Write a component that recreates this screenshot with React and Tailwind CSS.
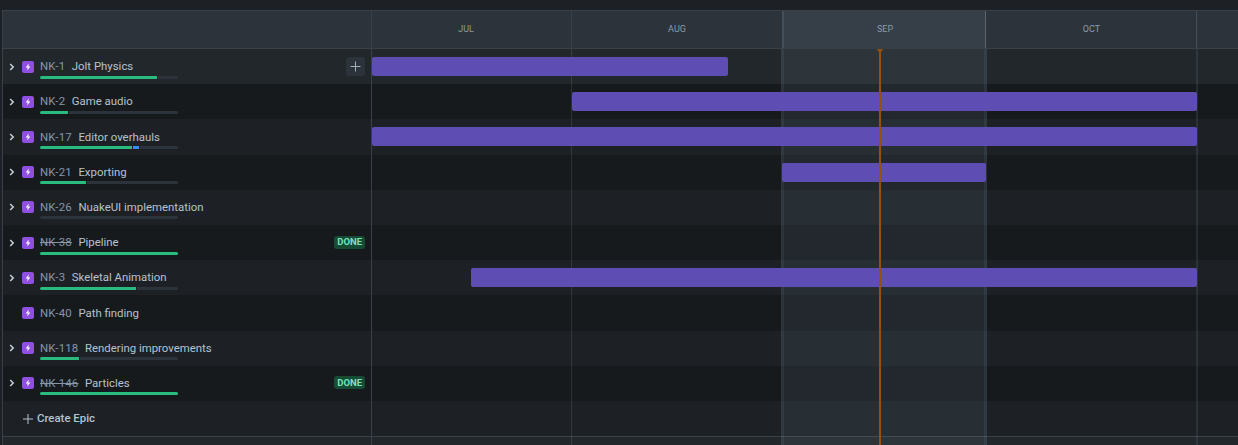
const rows = [
  { k: "NK-1", t: "Jolt Physics", g: 117, b: 0, bar: [0, 356], bg: "bg-[#22272b]", add: true },
  { k: "NK-2", t: "Game audio", g: 28, b: 0, bar: [200, 625], bg: "bg-[#161a1d]" },
  { k: "NK-17", t: "Editor overhauls", g: 92, b: 6, bar: [0, 825], bg: "bg-[#1d2125]" },
  { k: "NK-21", t: "Exporting", g: 46, b: 0, bar: [410, 204], bg: "bg-[#161a1d]" },
  { k: "NK-26", t: "NuakeUI implementation", g: 0, b: 0, bg: "bg-[#1d2125]" },
  { k: "NK-38", t: "Pipeline", g: 138, b: 0, done: true, bg: "bg-[#161a1d]" },
  { k: "NK-3", t: "Skeletal Animation", g: 96, b: 0, bar: [99, 726], bg: "bg-[#1d2125]" },
  { k: "NK-40", t: "Path finding", none: true, bg: "bg-[#161a1d]" },
  { k: "NK-118", t: "Rendering improvements", g: 39, b: 0, bar: null, bg: "bg-[#1d2125]" },
  { k: "NK-146", t: "Particles", g: 138, b: 0, done: true, bg: "bg-[#161a1d]" },
];

function Epic() {
  return (
    <svg width="12" height="12" viewBox="0 0 12 12" className="shrink-0">
      <rect width="12" height="12" rx="2" fill="#8f4fe0" />
      <path d="M6.8 2.4 3.7 6.4h2L5.2 9.6l3.1-4.1h-2z" fill="#fff" />
    </svg>
  );
}

function Chevron() {
  return (
    <svg width="6" height="8" viewBox="0 0 6 8" className="shrink-0">
      <path d="M1.2 1 4.2 4 1.2 7" fill="none" stroke="#c7d1db" strokeWidth="1.5" />
    </svg>
  );
}

function Progress({ g, b }) {
  if (g >= 138) return <div className="h-[3px] w-[138px] rounded-sm bg-[#2abb7f]" />;
  return (
    <div className="flex h-[3px] w-[138px] gap-[1px] overflow-hidden rounded-sm">
      {g > 0 && <div className="h-full bg-[#2abb7f]" style={{ width: g }} />}
      {b > 0 && <div className="h-full bg-[#388bff]" style={{ width: b }} />}
      <div className="h-full flex-1 bg-[#2c333a]" />
    </div>
  );
}

function Row({ r }) {
  return (
    <div className={`flex h-[35.2px] ${r.bg}`}>
      <div className="flex w-[368px] shrink-0 items-center pl-[6px] pr-[6px]">
        <div className="flex w-[13px] shrink-0 items-center">{!r.none && <Chevron />}</div>
        <Epic />
        <div className="ml-[6px] flex min-w-0 flex-1 flex-col">
          <div className={`flex h-[14px] items-center leading-[14px] ${r.none ? "" : "mt-[4.6px]"}`}>
            <span className={`tracking-[0.2px] text-[#8696a7] ${r.done ? "line-through" : ""}`}>{r.k}</span>
            <span className="ml-[6.5px] text-[#b6c2cf]">{r.t}</span>
          </div>
          {!r.none && <div className="mt-[2.4px]"><Progress g={r.g} b={r.b} /></div>}
        </div>
        {r.done && (
          <span className="mb-[1px] flex h-[13px] items-center rounded-[3px] bg-[#164b35] px-[3px] text-[9.5px] font-bold leading-none text-[#7ee2b8]">
            DONE
          </span>
        )}
        {r.add && (
          <span className="flex h-[19px] w-[19px] items-center justify-center rounded-[3px] bg-[#2c333a]">
            <svg width="11" height="11" viewBox="0 0 11 11">
              <path d="M5.5 0.5v10M0.5 5.5h10" stroke="#9fadbc" strokeWidth="1" />
            </svg>
          </span>
        )}
      </div>
      <div className="flex min-w-0 flex-1 items-center border-l border-[#38414a]">
        {r.bar && (
          <div
            className="relative z-10 h-[19px] rounded-[2px] bg-[#5e4db2]"
            style={{ marginLeft: r.bar[0], width: r.bar[1] }}
          />
        )}
      </div>
    </div>
  );
}

export default function App() {
  return (
    <div
      className="relative h-[445px] w-[1238px] overflow-hidden bg-[#1d2125] pt-[10px] text-[11.4px]"
      style={{ fontFamily: 'Roboto, sans-serif' }}
    >
      <div className="ml-[2px] border-l border-t border-[#38414a]">
        <div className="flex h-[38px] border-b border-[#38414a] bg-[#2c333a] text-[9px] text-[#8c9bab]">
          <div className="w-[368px] shrink-0" />
          <div className="flex flex-1 border-l border-[#38414a]">
            <div className="flex w-[200px] items-center justify-center border-r border-[#38414a] pr-[11px]">JUL</div>
            <div className="flex w-[210px] items-center justify-center">AUG</div>
            <div className="flex w-[203px] items-center justify-center border-l-2 border-[#454f59] bg-[#363e47] pl-[1px]">SEP</div>
            <div className="flex w-[211px] items-center justify-center border-l border-[#5b6670] pl-[1px]">OCT</div>
            <div className="flex-1 border-l border-[#454f59]" />
          </div>
        </div>
        {rows.map((r) => (
          <Row key={r.k} r={r} />
        ))}
        <div className="flex h-[35px] bg-[#1d2125]">
          <div className="flex w-[368px] shrink-0 items-center pl-[19px] pt-[1px] font-medium text-[#b6c2cf]">
            <svg width="12" height="12" viewBox="0 0 12 12" className="mr-[3px]">
              <path d="M6 1v10M1 6h10" stroke="#b6c2cf" strokeWidth="1" />
            </svg>
            Create Epic
          </div>
          <div className="flex-1 border-l border-[#38414a]" />
        </div>
        <div className="flex h-[10px] border-t border-[#38414a] bg-[#22272b]">
          <div className="w-[368px] shrink-0" />
          <div className="flex-1 border-l border-[#38414a]" />
        </div>
      </div>

      {/* vertical month lines and today marker */}
      <div className="pointer-events-none absolute bottom-0 left-[571px] top-[49px] w-px bg-[#ffffff1a]" />
      <div className="pointer-events-none absolute bottom-0 left-[781px] top-[49px] w-[206px] border-x-[3px] border-[#a6c5e214] bg-[#a6c5e216]" />
      <div className="pointer-events-none absolute bottom-0 left-[1196px] top-[49px] w-[2px] bg-[#a6c5e21c]" />
      <div className="pointer-events-none absolute bottom-0 left-[879px] top-[49px] z-20 w-[2px] bg-[#974f0c]" />
      <div className="pointer-events-none absolute left-[877px] top-[49px] z-20 h-0 w-0 border-x-[3px] border-t-[5px] border-x-transparent border-t-[#974f0c]" />
    </div>
  );
}
